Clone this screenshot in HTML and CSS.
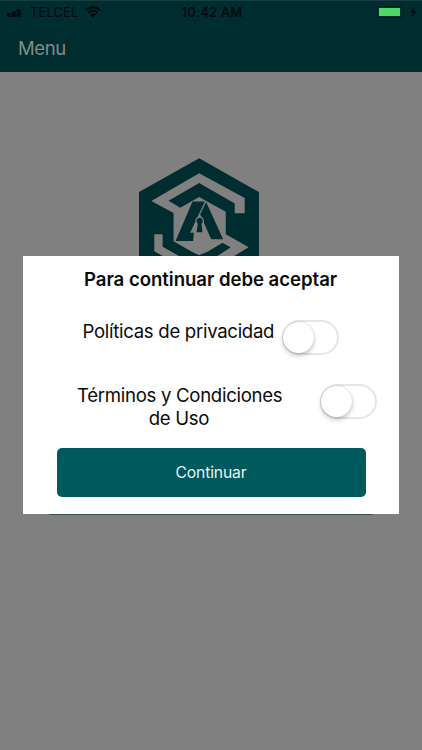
FILE: index.html
```html
<!DOCTYPE html>
<html lang="es">
<head>
<meta charset="utf-8">
<title>Menu</title>
<link rel="stylesheet" href="styles.css">
</head>
<body>
<div class="screen">
  <header class="header">
    <div class="status">
      <div class="carrier">
        <svg class="signal" width="18" height="10" viewBox="0 0 18 10"><rect x="0" y="6" width="3.8" height="4" rx=".8"/><rect x="4.9" y="4.3" width="3.8" height="5.7" rx=".8"/><rect x="9.8" y="2.2" width="3.8" height="7.8" rx=".8"/><rect class="weak" x="14.7" y="0" width="3.3" height="10" rx=".8"/></svg>
        <span class="carrier-name">TELCEL</span>
        <svg class="wifi" width="16" height="12" viewBox="0 0 16 12"><path class="wave" d="M1 4.2Q8-2 15 4.2M3.4 6.8Q8 2.7 12.6 6.8"/><path d="M8 11.5 5.2 8.7Q8 6.4 10.8 8.7Z"/></svg>
      </div>
      <span class="time">10:42 AM</span>
      <div class="power">
        <div class="battery"><div class="charge"></div></div>
        <svg class="bolt" width="7" height="10" viewBox="0 0 7 10"><path d="M4.7 0 .2 5.6h2.7L2 10l4.7-5.9H4Z"/></svg>
      </div>
    </div>
    <div class="title">Menu</div>
  </header>
  <main class="page">
    <svg class="logo" width="120" height="137" viewBox="27 23 361 411">
      <path class="dark" d="M208 23 388 125V331L208 433 27 331V125Z"/>
      <path class="light" d="M208 68 345 143V189H315V159L208 98 116 151 151 172 208 140 288 184V252L357 291 208 380 73 303V252H98V289L209 351 302 291 278 278 238 302Q208 326 181 302L131 274V188L64 152Z"/>
      <path class="dark" d="M98 289 131 274 181 302 208 315 238 302 278 278 302 292 208 351Z"/>
      <path class="dark" d="M188 153H225L181 247H192L190 272H137ZM229 155 280 267H244L211 192Z"/>
      <path class="halo" d="M209 202a10 10 0 0 1 6 18l3 26h-18l4-26a10 10 0 0 1 5-18Z"/>
      <path class="dark" d="M209 202a10 10 0 0 1 6 18l3 26h-18l4-26a10 10 0 0 1 5-18Z"/>
    </svg>
    <div class="page-button"></div>
  </main>
  <section class="modal">
    <h1 class="heading"><span>Para continuar debe aceptar</span></h1>
    <div class="row privacy"><span class="label">Políticas de privacidad</span><div class="switch"><div class="knob"></div></div></div>
    <div class="row terms"><span class="label">Términos y Condiciones<br>de Uso</span><div class="switch"><div class="knob"></div></div></div>
    <button class="continue">Continuar</button>
  </section>
</div>
</body>
</html>
```
FILE: styles.css
```css
* { box-sizing: border-box; }
body { margin: 0; font-family: Inter, "Liberation Sans", sans-serif; }
.screen { position: relative; width: 422px; height: 750px; background: #808080; overflow: hidden; }
.header { height: 72px; background: #002d2f; border-top: 1px solid #173f41; }
.status { display: grid; grid-template-columns: 1fr auto 1fr; align-items: center; height: 22px; padding: 0 5px 0 7px; color: #000c0e; }
.carrier { display: flex; align-items: center; }
svg { display: block; fill: #000c0e; }
.weak { fill: #06282a; }
.carrier-name { margin: 0 7px 0 5px; width: 48px; font-size: 13px; line-height: 16px; letter-spacing: .1px; }
.wave { fill: none; stroke: #000c0e; stroke-width: 2; }
.time { font-size: 13px; line-height: 16px; font-weight: 600; letter-spacing: .15px; }
.power { display: flex; align-items: center; justify-content: flex-end; gap: 6px; }
.battery { width: 27px; height: 12px; padding: 1px; border: 1px solid #001a1c; border-radius: 3px; }
.charge { width: 21px; height: 8px; background: #4cd964; }
.title { padding-left: 18px; margin-top: 13px; font-size: 18.5px; line-height: 24px; letter-spacing: -.4px; color: #808b8c; }
.page { display: flex; flex-direction: column; align-items: center; padding-top: 86px; }
.logo { margin-right: 24px; }
.logo .dark { fill: #002d2f; }
.logo .light { fill: #808080; }
.logo .halo { fill: none; stroke: #808080; stroke-width: 7; }
.page-button { width: 326px; height: 49px; margin-top: 171px; border-radius: 3px; background: #2c4f4c; }
.modal { position: absolute; left: 23px; top: 256px; width: 376px; height: 258px; display: flex; flex-direction: column; background: #fff; color: #0b0b0b; }
.heading { margin: 11px 0 0; padding-left: 61px; font-size: 18.6px; line-height: 24px; font-weight: 600; letter-spacing: -.04px; white-space: nowrap; }
.row { display: flex; align-items: flex-start; font-size: 18.6px; line-height: 23px; letter-spacing: -.3px; white-space: nowrap; }
.privacy { height: 35px; margin: 29px 0 0 59.5px; }
.privacy .label { width: 199.5px; }
.terms { height: 48px; margin: 29px 0 0 54px; }
.terms .label { width: 204px; margin-right: 39px; text-align: center; }
.switch { width: 57px; height: 35px; border: 2px solid #e5e5e5; border-radius: 18px; }
.knob { width: 31px; height: 31px; margin-left: -1px; border-radius: 50%; background: #fff; box-shadow: 0 3px 5px rgba(0,0,0,.2), 0 0 2px rgba(0,0,0,.22); }
.continue { width: 309px; height: 49px; margin: 16px 0 0 33.5px; padding: 0; border: 0; border-radius: 5px; background: #00595c; color: #e7f4f4; font: 15.7px/49px Inter, sans-serif; letter-spacing: -.15px; }
```
